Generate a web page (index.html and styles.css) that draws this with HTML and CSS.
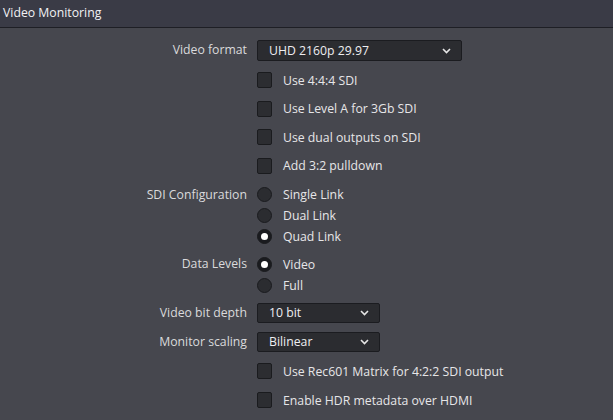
FILE: index.html
```html
<!DOCTYPE html>
<html>
<head>
<meta charset="utf-8">
<link rel="stylesheet" href="styles.css">
</head>
<body>
<div class="panel">
  <div class="header">Video Monitoring</div>
  <div class="form">
    <div class="row row-format">
      <div class="label">Video format</div>
      <div class="select wide"><span>UHD 2160p 29.97</span><svg class="chev" viewBox="0 0 9 6" width="9" height="6"><path d="M1 1 L4.5 4.5 L8 1" fill="none" stroke="#e6e6e6" stroke-width="1.6"/></svg></div>
    </div>
    <div class="group checks">
      <div class="opt"><span class="cb"></span>Use 4:4:4 SDI</div>
      <div class="opt"><span class="cb"></span>Use Level A for 3Gb SDI</div>
      <div class="opt"><span class="cb"></span>Use dual outputs on SDI</div>
      <div class="opt"><span class="cb"></span>Add 3:2 pulldown</div>
    </div>
    <div class="row radios sdi">
      <div class="label">SDI Configuration</div>
      <div class="stack">
        <div class="opt"><span class="rb"></span>Single Link</div>
        <div class="opt"><span class="rb"></span>Dual Link</div>
        <div class="opt"><span class="rb on"></span>Quad Link</div>
      </div>
    </div>
    <div class="row radios levels">
      <div class="label">Data Levels</div>
      <div class="stack">
        <div class="opt"><span class="rb on"></span>Video</div>
        <div class="opt"><span class="rb"></span>Full</div>
      </div>
    </div>
    <div class="row row-depth">
      <div class="label">Video bit depth</div>
      <div class="select narrow"><span>10 bit</span><svg class="chev" viewBox="0 0 9 6" width="9" height="6"><path d="M1 1 L4.5 4.5 L8 1" fill="none" stroke="#e6e6e6" stroke-width="1.6"/></svg></div>
    </div>
    <div class="row row-scaling">
      <div class="label">Monitor scaling</div>
      <div class="select narrow"><span>Bilinear</span><svg class="chev" viewBox="0 0 9 6" width="9" height="6"><path d="M1 1 L4.5 4.5 L8 1" fill="none" stroke="#e6e6e6" stroke-width="1.6"/></svg></div>
    </div>
    <div class="group checks last">
      <div class="opt"><span class="cb"></span>Use Rec601 Matrix for 4:2:2 SDI output</div>
      <div class="opt"><span class="cb"></span>Enable HDR metadata over HDMI</div>
    </div>
  </div>
</div>
</body>
</html>
```
FILE: styles.css
```css
html, body {
  margin: 0;
  padding: 0;
  background: #46474e;
}
body {
  font-family: "Open Sans", "Noto Sans", sans-serif;
  font-size: 12.25px;
  color: #dcdcde;
  width: 613px;
  height: 420px;
  overflow: hidden;
}
.header {
  height: 27px;
  line-height: 25px;
  background: #3a3b46;
  border-bottom: 1px solid #1e1f25;
  padding-left: 3px;
  font-size: 12.25px;
  color: #f2f2f4;
}
.form {
  display: flex;
  flex-direction: column;
  padding-top: 12px;
}
.row {
  display: grid;
  grid-template-columns: 247px 1fr;
  column-gap: 10px;
  align-items: start;
}
.label {
  text-align: right;
  color: #dadadc;
}
.row-format .label,
.row-depth .label,
.row-scaling .label {
  line-height: 20px;
}
.select {
  box-sizing: border-box;
  display: flex;
  align-items: center;
  justify-content: space-between;
  background: #2b2c30;
  border: 1px solid #1b1c20;
  border-radius: 2px;
  padding: 0 10px 0 11px;
  color: #eeeef0;
}
.select.wide { width: 205px; height: 21px; }
.select.narrow { width: 123px; height: 20px; }
.chev { display: block; }
.row-depth { margin-top: 7px; }
.row-scaling { margin-top: 9px; }

.group {
  padding-left: 257px;
  display: flex;
  flex-direction: column;
}
.checks { margin-top: 5px; }
.checks .opt { height: 28.5px; }
.checks.last { margin-top: 5px; }
.checks.last .opt { height: 29px; }
.opt {
  display: flex;
  align-items: center;
  color: #e6e6e8;
}
.cb {
  box-sizing: border-box;
  width: 15px;
  height: 16px;
  margin-right: 11px;
  background: #2c2d31;
  border: 1px solid #1a1b1e;
  border-radius: 2px;
  flex: none;
}
.radios .label { line-height: 20.75px; }
.stack .opt { height: 20.75px; }
.sdi { margin-top: 4.5px; }
.levels { margin-top: 7.25px; }
.rb {
  box-sizing: border-box;
  width: 15px;
  height: 15px;
  margin-right: 11px;
  border-radius: 50%;
  background: #2b2c30;
  border: 1px solid #1a1b1e;
  flex: none;
  display: flex;
  align-items: center;
  justify-content: center;
}
.rb.on { background: #1a1b1f; }
.rb.on::after {
  content: "";
  width: 7px;
  height: 7px;
  border-radius: 50%;
  background: #ffffff;
}
```
